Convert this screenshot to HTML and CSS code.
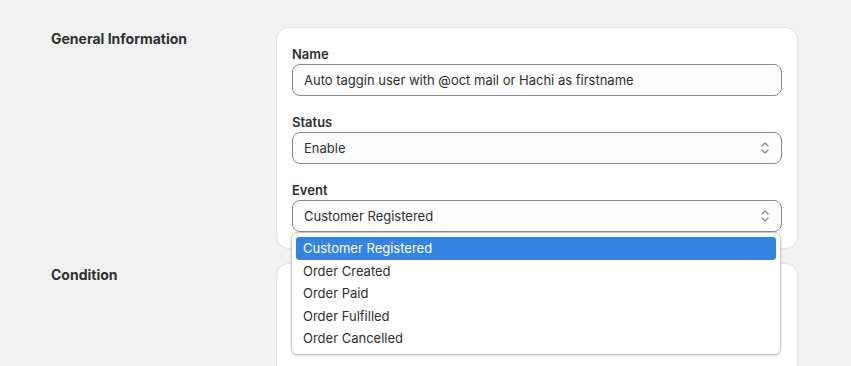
FILE: index.html
```html
<!DOCTYPE html>
<html lang="en">
  <head>
    <meta charset="UTF-8" />
    <meta name="viewport" content="width=device-width, initial-scale=1.0" />
    <title>Automation rule</title>
    <link rel="stylesheet" href="styles.css">
  </head>
  <body>
    <div class="page">
      <section class="section">
        <h2 class="section-title">General Information</h2>
        <div class="card">
          <div class="form-group">
            <label class="field-label">Name</label>
            <div class="field">Auto taggin user with @oct mail or Hachi as firstname</div>
          </div>
          <div class="form-group">
            <label class="field-label">Status</label>
            <div class="field select">
              <span>Enable</span>
              <svg class="chevron" width="12" height="14" viewBox="0 0 12 14" fill="none">
                <path d="M3 5l3-3 3 3M3 9l3 3 3-3" stroke="#8a8a8a" stroke-width="1.3" stroke-linecap="round" stroke-linejoin="round"/>
              </svg>
            </div>
          </div>
          <div class="form-group dropdown-wrap">
            <label class="field-label">Event</label>
            <div class="field select">
              <span>Customer Registered</span>
              <svg class="chevron" width="12" height="14" viewBox="0 0 12 14" fill="none">
                <path d="M3 5l3-3 3 3M3 9l3 3 3-3" stroke="#8a8a8a" stroke-width="1.3" stroke-linecap="round" stroke-linejoin="round"/>
              </svg>
            </div>
            <ul class="dropdown">
              <li class="selected">Customer Registered</li>
              <li>Order Created</li>
              <li>Order Paid</li>
              <li>Order Fulfilled</li>
              <li>Order Cancelled</li>
            </ul>
          </div>
        </div>
      </section>
      <section class="section">
        <h2 class="section-title">Condition</h2>
        <div class="card card-tall"></div>
      </section>
    </div>
  </body>
</html>
```

FILE: styles.css
```css
body {
  margin: 0;
  font-family: Inter, "Noto Sans", sans-serif;
  background-color: #f1f1f1;
  color: #303030;
  font-size: 13px;
  overflow: hidden;
}

.page {
  padding: 28px 0 0 51px;
  display: flex;
  flex-direction: column;
  gap: 16px;
}

.section {
  display: grid;
  grid-template-columns: 226px 520px;
  align-items: start;
}

.section-title {
  margin: 0;
  padding-top: 1px;
  font-size: 14px;
  font-weight: 650;
  line-height: 20px;
}

/* Card */
.card {
  background: #fff;
  border-radius: 12px;
  box-shadow: 0 0 0 1px #e3e3e3;
  padding: 16px 15px;
  display: flex;
  flex-direction: column;
  gap: 16px;
}

.card-tall {
  height: 200px;
}

.field-label {
  display: block;
  font-weight: 600;
  line-height: 20px;
}

.field {
  box-sizing: border-box;
  height: 32px;
  border: 1px solid #8a8a8a;
  border-radius: 8px;
  background: #fdfdfd;
  padding: 0 11px;
  display: flex;
  align-items: center;
  line-height: 20px;
}

.select {
  justify-content: space-between;
}

.chevron {
  margin-right: -1px;
}

/* Open dropdown */
.dropdown-wrap {
  position: relative;
}

.dropdown {
  position: absolute;
  top: 52px;
  left: -1px;
  width: 490px;
  box-sizing: border-box;
  margin: 0;
  padding: 4px;
  list-style: none;
  background: #fff;
  border: 1px solid #c8c6c2;
  border-radius: 6px;
  box-shadow: 0 1px 2px rgba(0, 0, 0, 0.15);
  z-index: 10;
}

.dropdown li {
  height: 22.5px;
  line-height: 22px;
  padding: 0 7px;
  border-radius: 3px;
}

.dropdown li.selected {
  background: #3584e4;
  color: #fff;
}
```
